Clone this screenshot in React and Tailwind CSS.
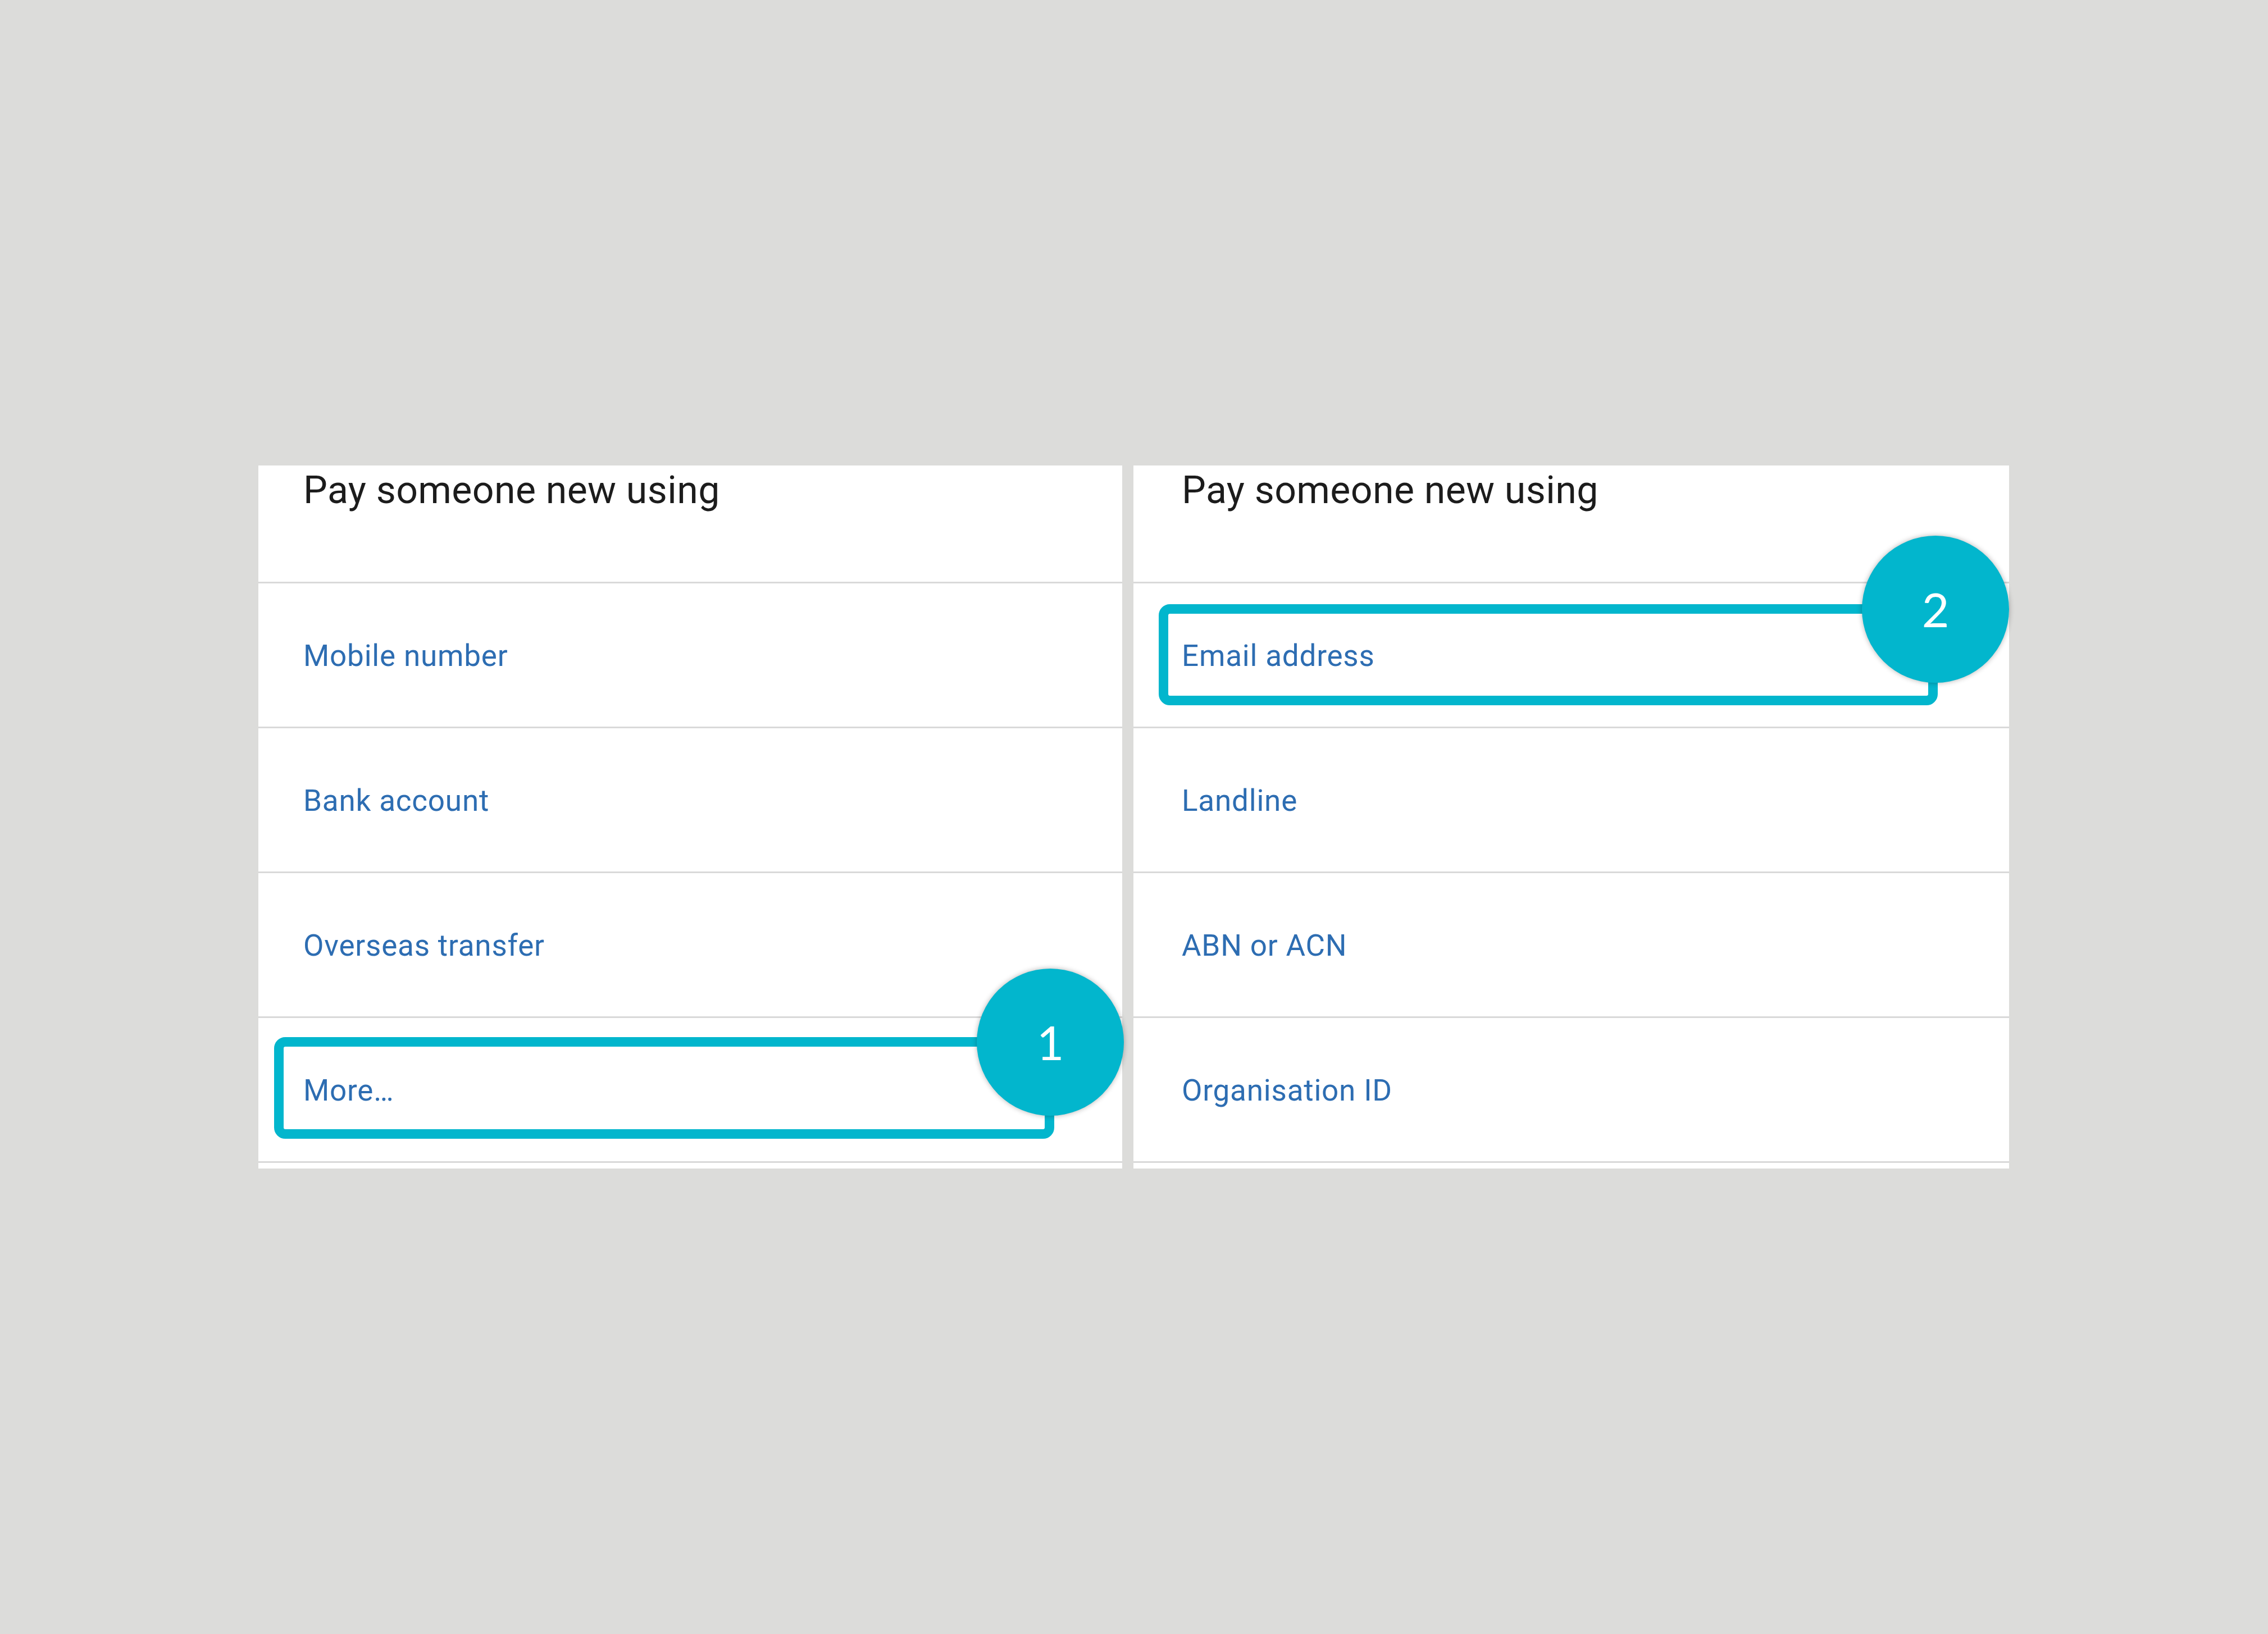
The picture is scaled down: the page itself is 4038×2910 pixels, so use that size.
import React from "react";

const roboto = { fontFamily: "Roboto, 'Liberation Sans', sans-serif" };

function Badge({ n, className }) {
  return (
    <div
      className={`absolute w-[262px] h-[262px] rounded-full bg-[#02b6cd] flex items-center justify-center text-white text-[84px] leading-none font-normal shadow-[0_0_10px_rgba(0,0,0,0.3)] z-20 ${className}`}
      style={{ fontFamily: "Lato, 'Liberation Sans', sans-serif" }}
    >
      {n}
    </div>
  );
}

function Row({ label, pl, children }) {
  return (
    <div className={`relative h-[258px] border-b-[3px] border-[#d9d9d9] flex items-center pt-[3px] ${pl}`}>
      <span className="text-[53px] leading-none tracking-[0.8px] text-[#2d6db2]" style={roboto}>
        {label}
      </span>
      {children}
    </div>
  );
}

function Panel({ width, pl, items, highlight }) {
  return (
    <div className={`relative bg-white ${width}`}>
      <div className={`h-[210px] border-b-[3px] border-[#d9d9d9] pt-[10px] ${pl}`}>
        <div className="text-[68px] leading-none tracking-[0.4px] text-[#1c1c1c]" style={roboto}>
          Pay someone new using
        </div>
      </div>
      {items.map((label, i) => (
        <Row key={label} label={label} pl={pl}>
          {highlight && highlight.index === i ? highlight.node : null}
        </Row>
      ))}
      <div className="h-[10px]" />
    </div>
  );
}

export default function App() {
  return (
    <div className="w-[4038px] h-[2910px] bg-[#dcdcda] pt-[829px] pl-[460px] flex items-start gap-[20px]">
      <Panel
        width="w-[1538px]"
        pl="pl-[80px]"
        items={["Mobile number", "Bank account", "Overseas transfer", "More…"]}
        highlight={{
          index: 3,
          node: (
            <>
              <div className="absolute left-[28px] top-[34px] w-[1389px] h-[181px] border-[17px] border-[#02b6cd] rounded-[20px] pointer-events-none" />
              <Badge n="1" className="left-[1279px] top-[-88px]" />
            </>
          ),
        }}
      />
      <Panel
        width="w-[1559px]"
        pl="pl-[86px]"
        items={["Email address", "Landline", "ABN or ACN", "Organisation ID"]}
        highlight={{
          index: 0,
          node: (
            <>
              <div className="absolute left-[45px] top-[37px] w-[1387px] h-[180px] border-[17px] border-[#02b6cd] rounded-[20px] pointer-events-none" />
              <Badge n="2" className="left-[1297px] top-[-85px]" />
            </>
          ),
        }}
      />
    </div>
  );
}
